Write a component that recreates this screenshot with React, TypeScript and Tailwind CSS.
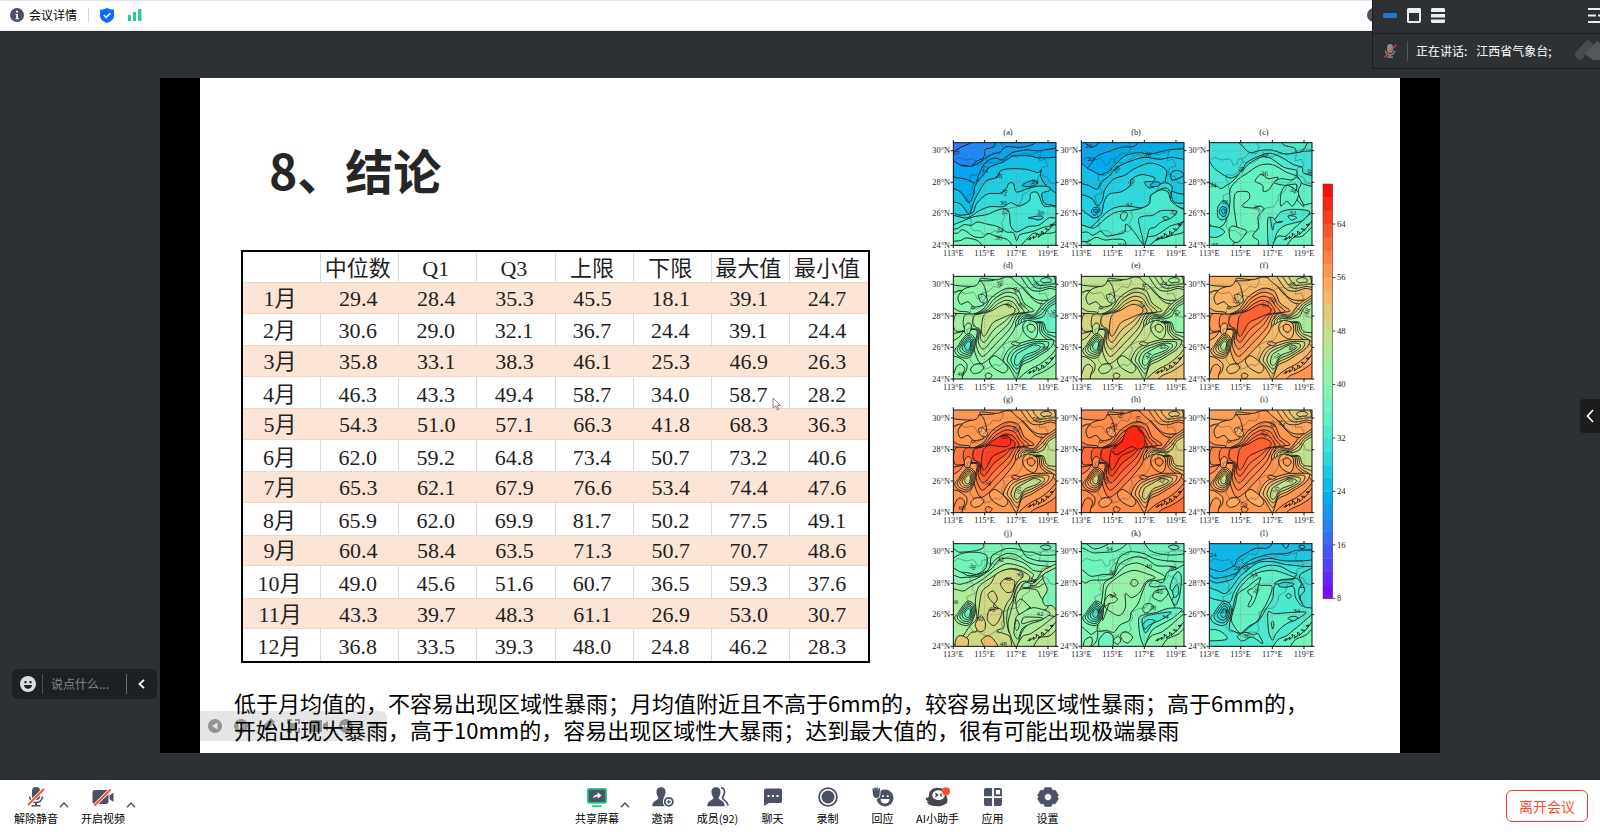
import React from "react";

/* ---------- contour chart ---------- */

type Pt = [number, number];
type Shape = [number, string];

const parse = (s: string): Pt[] => s.trim().split(/\s+/).map((p) => p.split(",").map(Number) as Pt);

function smooth(p: Pt[]): string {
  const n = p.length;
  let d = `M${p[0][0]} ${p[0][1]}`;
  for (let i = 0; i < n; i++) {
    const a = p[(i - 1 + n) % n], b = p[i], c = p[(i + 1) % n], e = p[(i + 2) % n];
    const k = 7;
    d += `C${(b[0] + (c[0] - a[0]) / k).toFixed(1)} ${(b[1] + (c[1] - a[1]) / k).toFixed(1)} ${(c[0] - (e[0] - b[0]) / k).toFixed(1)} ${(c[1] - (e[1] - b[1]) / k).toFixed(1)} ${c[0].toFixed(1)} ${c[1].toFixed(1)}`;
  }
  return d + "Z";
}

function rainbow(level: number): string {
  const x = Math.min(1, Math.max(0, (level - 8) / 62));
  const r = Math.min(1, Math.abs(2 * x - 0.5));
  const g = Math.sin(Math.PI * x);
  const b = Math.cos((Math.PI * x) / 2);
  return `rgb(${Math.round(r * 255)},${Math.round(g * 245)},${Math.round(b * 255)})`;
}

function nest(outer: string, inner: string, levels: number[]): Shape[] {
  const o = parse(outer), n = parse(inner);
  return levels.map((lv, i) => {
    const t = levels.length > 1 ? i / (levels.length - 1) : 0;
    return [lv, o.map((q, j) => `${q[0] + (n[j][0] - q[0]) * t},${q[1] + (n[j][1] - q[1]) * t}`).join(" ")];
  });
}

const SE = "340,-30 340,340 -30,340";
const below = (line: string) => line + " " + SE;

const CENTRE_OUT = "-20,112 48,116 90,98 116,62 160,36 195,44 212,80 242,104 200,114 180,165 132,222 84,262 62,215 68,160 -20,172";
const CENTRE_IN = "90,120 98,110 118,102 138,90 155,84 172,88 185,98 182,110 168,116 145,126 118,140 98,175 88,178 84,160 86,138";
const NORTH_OUT = "-20,20 60,30 78,14 84,6 130,10 160,2 190,8 204,30 230,60 262,82 330,70 330,-30 -20,-30";
const LEFT_OUT = "26,190 44,172 62,182 66,205 56,234 40,246 14,238 4,222 16,206";
const LEFT_IN = "38,202 44,194 50,198 52,206 48,218 42,222 36,218 34,212 35,206";
const EAST_OUT = "188,135 210,112 240,116 262,92 285,72 330,60 330,215 290,194 262,172 256,138 236,150 205,128 190,150";
const EAST_IN = "212,128 222,126 244,128 270,120 288,92 330,78 330,160 292,168 278,160 270,138 240,136 226,132 214,134";
const LOBE_OUT = "150,252 164,222 186,206 230,192 260,190 300,192 290,216 258,238 232,254 205,268 190,306 176,288 166,270";
const LOBE_IN = "184,250 190,234 202,226 220,216 240,206 256,208 262,214 248,224 232,230 214,238 198,262 190,268 184,262";
const TOP_OUT = "196,-20 206,6 232,40 262,44 290,36 330,42 330,-20 260,-30";
const TOP_IN = "262,10 264,16 272,20 280,18 290,18 294,10 284,4 272,5";

function summer(b: number, c: number[], e: number[], se: number): Shape[] {
  return [
    [b - 2, "-20,-20 130,-20 150,-8 120,12 80,14 84,26 60,44 20,42 -20,50"],
    [b, "14,62 32,38 62,28 80,14 92,28 100,60 92,84 62,92 44,76 22,84"],
    [b - 2, "76,56 90,54 102,68 98,80 84,78 78,68"],
    ...nest(NORTH_OUT, "-20,-20 60,-12 88,-10 100,-8 140,-2 166,-10 180,10 216,40 236,62 264,72 330,58 330,-40 -20,-40", [b, b - 1]),
    ...nest(TOP_OUT, TOP_IN, [e[0], e[1], e[1], e[2]]),
    [b + 2, "-20,90 16,104 50,110 38,142 28,168 12,186 -20,192"],
    [b + 4, "-20,106 12,122 24,140 12,156 -20,164"],
    ...nest(CENTRE_OUT, CENTRE_IN, c),
    [b, "34,150 44,140 54,146 52,162 44,176 34,168"],
    ...nest(LEFT_OUT, LEFT_IN, [b, b - 2, b - 4, b - 6, b - 8]),
    ...nest(EAST_OUT, EAST_IN, e),
    [b - 1, "208,150 222,132 250,142 252,172 240,188 216,174"],
    [b + 1, "222,148 236,144 246,156 236,168 224,162"],
    ...nest(LOBE_OUT, LOBE_IN, e),
    [b, "-20,246 12,242 40,262 36,288 12,300 -20,310"],
    [b + 1, "8,274 22,264 34,276 28,296 22,320 -4,320"],
    [b - 1, "52,278 62,266 80,262 92,272 82,286 66,292 56,288"],
    [b + 1, "96,296 104,290 116,296 110,306 100,306"],
    [b - 1, "108,252 124,238 150,256 164,276 150,290 120,274"],
    [se - 2, "196,324 206,298 232,278 262,262 290,240 330,204 330,330"],
    [se, "220,330 240,300 270,286 304,264 330,236 330,330"],
    [b + 1, "174,202 184,196 200,202 190,208"],
    [b - 3, "54,93 60,91 64,95 58,98"],
  ];
}

const MAPS: { id: string; base: number; shift?: number; shapes: Shape[]; labels: [number, number, number, string][] }[] = [
  {
    id: "a", base: 17, shift: 1.5,
    shapes: [
      [18, below("-20,38 0,29 22,14 52,1 76,-20")],
      [20, below("-20,74 0,70 34,68 52,74 66,58 92,44 96,20 122,12 148,-20")],
      [21, below("-20,72 28,70 56,70 84,56 108,38 140,28 158,12 200,14 240,5 262,-20")],
      [22, below("-20,116 12,106 38,110 66,120 78,92 96,60 124,46 150,52 176,30 220,22 260,24 330,8")],
      [24, below("-20,146 0,138 24,150 46,180 60,158 66,128 92,94 112,72 150,58 180,40 230,40 260,46 330,36")],
      [26, below("-20,184 0,178 24,186 48,214 62,176 80,142 100,114 132,104 142,84 172,78 218,80 254,90 264,82 262,102 284,134 330,146")],
      [28, below("-20,214 20,218 58,210 70,182 102,154 140,152 160,136 166,122 180,122 190,148 228,136 260,130 288,134 288,144 266,152 270,176 286,186 330,170")],
      [30, below("-20,224 40,226 78,204 110,192 150,192 172,180 198,190 228,174 232,152 252,150 270,188 292,190 330,174")],
      [32, below("-20,250 0,246 26,236 62,222 100,216 134,202 158,198 168,212 172,250 190,268 224,252 256,248 286,226 330,204")],
      [34, below("-20,268 12,258 32,246 54,248 72,238 100,244 134,252 160,268 180,270 190,294 200,276 232,268 264,256 330,216")],
      [35, below("-20,274 12,272 24,262 36,264 62,282 88,284 104,272 126,280 160,290 174,310 150,340 190,340 204,308 240,272 264,274 330,238")],
      [36, "-20,300 20,294 40,286 76,296 84,326 -20,330"],
      [24, "206,128 222,118 240,114 252,120 244,128 224,132"], [28, "224,226 242,222 262,220 270,226 254,232 240,228"],
    ],
    labels: [[8, 28, -30, "18"], [96, 80, -80, "22"], [138, 98, 20, "26"], [152, 150, -70, "28"], [150, 180, 0, "30"], [154, 208, -80, "32"], [140, 262, 10, "34"], [136, 284, 5, "36"], [262, 210, 15, "30"], [246, 116, 5, "24"]],
  },
  {
    id: "b", base: 20, shift: 1.5,
    shapes: [
      [21, below("-20,10 30,14 52,2 66,-20")],
      [22, below("-20,92 4,88 24,70 48,40 84,26 120,14 160,10 200,-20")],
      [24, below("-20,74 24,80 56,96 84,84 104,64 130,40 170,30 208,34 260,22 330,12")],
      [25, below("-20,140 14,126 46,140 60,118 84,100 108,74 146,56 190,44 236,50 270,44 330,46")],
      [26, below("-20,166 0,156 32,168 48,190 64,170 70,142 96,110 130,98 156,80 200,62 230,66 256,84 252,118 266,144 330,142")],
      [28, below("-20,196 12,210 38,226 60,214 68,178 84,154 118,148 146,130 150,110 180,96 218,104 216,116 190,118 206,136 250,120 272,132 270,156 282,180 330,160")],
      [30, below("-20,254 4,248 28,254 58,226 80,206 104,194 140,190 184,196 214,182 228,146 254,136 268,152 272,182 330,184")],
      [31, below("-20,248 36,256 72,228 96,212 116,206 170,200 204,184 208,160 236,142 260,148 274,180 330,190")],
      [32, below("-20,280 16,268 34,278 58,266 74,280 104,276 130,268 134,244 160,270 178,296 190,308 196,284 224,278 264,252 330,206")],
      [34, below("-20,300 20,296 44,284 70,292 96,290 128,292 142,320 190,340 208,306 230,290 266,280 330,236")],
      [24, "30,206 36,196 48,194 56,202 46,214 38,218"], [22, "36,204 44,200 50,204 44,210"],
      [24, "206,128 220,118 236,120 232,130 214,132"], [25, "268,94 280,84 298,86 308,98 290,108 272,112"],
      [32, "118,216 126,208 138,212 134,228 126,234 118,226"],
      [30, "172,228 190,220 214,218 240,204 286,206 270,226 240,238 220,254 204,260 196,290 188,306 182,280 176,256"],
      [32, "244,224 254,222 262,226 254,232"],
    ],
    labels: [[22, 8, 0, "20"], [30, 46, 0, "22"], [105, 80, -50, "28"], [200, 34, 15, "26"], [150, 118, -60, "30"], [144, 184, 0, "32"], [278, 208, 20, "32"], [120, 306, 0, "34"], [22, 300, 60, "34"]],
  },
  {
    id: "c", base: 30, shift: 0.8,
    shapes: [
      [31, "92,-20 100,10 122,30 150,24 186,22 230,34 284,26 330,20 330,-20"],
      [32, "220,-20 222,6 256,16 262,30 282,22 296,-4 300,-20"],
      [32, below("-20,60 18,80 44,98 66,106 92,92 112,60 150,40 184,32 220,46 252,66 278,74 284,92 330,90")],
      [34, below("-20,136 20,130 34,138 52,128 74,112 96,86 126,58 160,42 186,48 224,74 262,84 262,108 282,124 330,120")],
      [35, below("-20,220 10,256 38,250 52,228 62,178 62,140 86,110 110,94 150,68 190,66 230,88 268,104 262,124 272,170 290,186 330,152")],
      [30, "24,210 26,192 42,174 56,184 60,204 54,224 38,232 26,224"], [28, "30,204 38,192 50,196 52,210 44,222 32,214"], [26, "36,204 44,198 48,206 42,214"],
      [36, "138,112 156,94 176,108 206,104 190,124 178,142 162,146 160,128 140,118"],
      [36, "74,190 80,150 116,148 120,168 98,190 130,196 152,190 164,200 146,222 148,252 130,280 148,296 132,330 60,330 80,292 84,266"],
      [33, "194,120 214,108 248,112 262,104 276,120 266,150 284,190 270,180 258,160 262,126 226,128"],
      [34, "214,190 216,148 234,128 268,152 250,190 232,176"],
      [32, "176,226 196,230 214,208 250,200 300,206 284,232 250,242 224,250 202,272 186,330 176,300"], [33, "184,230 190,224 204,240 220,236 196,242 190,262"], [33, "236,220 252,220 262,226 246,232"],
      [34, "196,326 204,282 230,280 262,250 330,202 330,330"], [36, "230,330 250,286 280,280 330,238 330,330"],
      [36, "60,260 70,250 90,256 112,266 96,290 80,300 62,286"], [32, "-20,250 26,254 46,268 20,284 -20,276"],
    ],
    labels: [[166, 36, 10, "32"], [166, 92, 5, "36"], [96, 82, -60, "30"], [12, 126, 10, "34"], [142, 194, 20, "36"], [250, 208, 0, "32"], [46, 176, 0, "32"], [252, 142, 30, "34"], [18, 304, 0, "35"], [298, 90, -70, "30"]],
  },
  { id: "d", base: 41, shapes: summer(41, [42, 43, 44, 45, 47], [39, 38, 37, 36], 42), labels: [[140, 20, 80, "38"], [190, 40, 60, "42"], [166, 84, 30, "46"], [248, 20, 10, "36"], [206, 86, 40, "42"], [298, 110, -70, "36"], [275, 212, 0, "38"], [22, 290, 0, "40"]] },
  { id: "e", base: 47, shapes: summer(47, [48, 49, 50, 52, 54], [46, 45, 43, 41], 52), labels: [[248, 20, 10, "44"], [182, 84, 50, "54"], [190, 28, 80, "46"], [248, 136, 0, "46"], [244, 210, -20, "42"], [200, 238, -60, "44"], [286, 110, -60, "42"]] },
  { id: "f", base: 53, shapes: summer(54, [56, 57, 58, 60, 62], [51, 49, 47, 44], 57), labels: [[248, 20, 0, "48"], [168, 82, -20, "62"], [190, 70, 30, "60"], [78, 74, 20, "52"], [246, 214, -20, "46"], [204, 240, -50, "50"], [292, 106, -70, "48"]] },
  { id: "g", base: 57, shapes: [...summer(57, [59, 60, 62, 64, 65], [55, 53, 51, 47], 59), [66, "108,102 132,84 154,76 168,82 172,100 158,110 130,108"]], labels: [[248, 24, 0, "56"], [154, 80, 0, "66"], [190, 56, 20, "62"], [104, 218, 20, "58"], [198, 240, 70, "50"], [248, 134, 20, "56"], [26, 292, 0, "60"]] },
  { id: "h", base: 58, shapes: [...summer(58, [60, 61, 63, 65, 66], [56, 54, 52, 50], 61), [67, "94,126 106,108 122,94 136,60 158,48 178,58 190,84 188,110 170,118 150,110 128,122 106,134"]], labels: [[178, 60, 40, "66"], [118, 14, -60, "60"], [98, 46, 10, "58"], [76, 210, 70, "60"], [254, 130, 20, "56"], [240, 210, 20, "52"], [172, 28, 80, "62"]] },
  { id: "i", base: 57, shapes: summer(56, [58, 59, 60, 61, 62], [54, 52, 50, 47], 59), labels: [[166, 70, 30, "62"], [190, 42, 70, "58"], [218, 40, 30, "54"], [240, 130, 10, "52"], [200, 240, -60, "50"], [104, 284, 10, "58"], [240, 210, 20, "50"]] },
  {
    id: "j", base: 36, shift: 0.5,
    shapes: [
      [38, below("-20,34 20,26 62,22 90,12 110,-20")],
      [37, "-20,60 24,30 70,26 100,36 98,72 70,92 34,86 -20,88"],
      [39, below("-20,90 20,84 44,96 76,92 108,76 114,40 140,22 166,14 204,20 220,40 262,52 330,46")],
      [40, below("-20,112 26,102 74,98 100,84 124,50 158,30 190,34 224,56 266,66 330,62")],
      [42, below("-20,134 20,122 44,116 82,98 116,74 138,48 168,44 212,58 240,80 270,84 330,96")],
      [44, below("-20,150 30,142 50,130 90,106 120,82 160,60 206,70 240,92 240,108 330,120")],
      [46, "50,246 70,224 66,172 76,130 110,104 150,80 190,76 228,96 222,114 200,118 186,140 178,170 164,196 160,230 166,264 180,310 -20,330 20,290"],
      [48, "74,220 80,170 88,140 112,120 130,90 168,76 204,84 208,100 190,118 174,160 160,180 150,210 152,250 130,262 170,280 160,330 20,330 50,270 70,262"],
      [49, "110,168 104,152 120,142 132,166 120,188 146,200 136,232 120,246 102,228 108,200 134,194"],
      [49, "142,118 158,104 184,112 178,142 160,146 146,132"],
      [50, "66,248 70,232 84,216 96,236 94,258 78,264"], [51, "6,310 10,282 24,276 44,286 44,306 34,320"], [52, "84,290 102,276 120,286 136,316 104,320 92,306"],
      ...nest("180,176 188,140 206,114 244,112 262,88 285,72 330,66 330,210 262,212 230,234 204,268 190,310 174,282 164,240", "212,132 214,128 222,124 232,126 248,124 262,110 276,102 280,116 268,122 256,130 236,130 224,132 216,134 213,133", [45, 44, 42]),
      [43, "186,180 190,154 204,136 248,138 262,160 284,190 250,206 220,180 202,166"],
      [40, "206,128 216,116 232,120 226,130 212,132"],
      [38, "268,100 284,84 330,76 330,210 296,186 276,186 268,166 282,138"],
      [42, "188,222 202,210 240,192 290,208 262,230 232,240 206,256 194,286 182,268"], [44, "206,240 210,222 228,220 264,222 266,228 236,232"], [44, "184,250 190,228 198,242 192,260"],
      ...nest(LEFT_OUT, LEFT_IN, [42, 41, 39, 38, 36]),
      [38, "202,-20 206,20 240,26 262,34 300,34 330,24 330,-20"], [36, "262,8 278,4 294,10 284,18 268,16"],
      [45, "196,326 206,280 232,270 262,250 330,210 330,330"], [46, "240,330 256,284 290,276 330,244 330,330"],
    ],
    labels: [[58, 68, 30, "38"], [142, 46, -10, "42"], [164, 104, 0, "48"], [116, 196, 10, "48"], [80, 224, 0, "50"], [202, 92, 30, "46"], [238, 108, 20, "44"], [260, 208, 0, "42"], [150, 298, 0, "48"], [4, 172, 0, "46"]],
  },
  {
    id: "k", base: 35, shift: 1,
    shapes: [
      [36, below("-20,8 40,16 80,2 106,-20")],
      [36, below("-20,34 40,28 96,24 120,14 150,-6 200,2 236,10 250,-20")],
      [37, below("-20,88 30,98 66,92 96,92 104,66 116,40 146,24 188,30 216,44 262,52 330,48")],
      [38, below("-20,120 12,118 30,110 76,108 98,94 116,60 158,40 196,46 226,66 270,68 330,80")],
      [40, "48,260 56,210 64,150 70,116 100,98 130,68 168,58 210,76 250,98 240,108 200,114 186,138 170,180 150,206 144,230 116,244 98,266 76,260"],
      [41, "64,230 70,170 78,128 116,96 156,80 196,90 222,102 194,114 174,148 150,162 132,150 132,192 112,216 70,190 74,166 90,156"],
      [42, "70,172 84,154 108,164 100,176 82,180 72,188"], [42, "148,118 154,108 166,110 170,120 160,128 150,124"],
      ...nest(LEFT_OUT, LEFT_IN, [37, 36, 34, 33, 31]),
      [36, "204,126 216,110 244,116 258,86 280,78 330,64 330,190 298,204 284,196 262,150 250,128 220,130"],
      [34, "266,134 276,100 290,84 300,100 296,150 284,184 272,170 280,150"], [32, "274,142 288,122 292,148 280,162"],
      [38, "214,160 222,142 252,136 260,150 240,172 226,168"], [38, "184,194 192,182 208,180 216,190 200,206 188,206"],
      [35, "172,226 186,214 226,206 262,194 302,196 276,222 248,238 216,256 200,282 190,310 176,276"], [32, "182,232 192,218 240,208 270,206 240,228 214,240 192,268"], [31, "184,244 200,228 222,232 202,246 192,256"],
      [38, "-20,240 16,262 30,272 48,262 46,290 28,310 -20,330"], [40, "10,290 30,280 32,298 20,320 6,320"], [36, "52,292 70,268 86,268 96,282 90,330 60,330"], [40, "96,290 112,278 118,292 108,302"], [40, "118,274 134,264 154,280 140,298 124,290"],
      [39, "196,326 206,280 240,266 262,250 330,204 330,330"], [41, "240,330 256,288 290,272 330,240 330,330"],
      [36, "196,-20 206,20 262,34 330,24 330,-20"], [34, "262,8 278,4 294,10 284,18 268,16"],
    ],
    labels: [[84, 14, 0, "34"], [92, 86, 10, "36"], [202, 66, 10, "40"], [94, 154, -30, "44"], [214, 190, 10, "38"], [234, 142, 0, "40"], [274, 72, 0, "36"], [252, 218, 0, "34"], [52, 200, 0, "30"]],
  },
  {
    id: "l", base: 24, shift: 0.8,
    shapes: [
      [25, below("-20,84 10,78 36,84 74,66 84,46 112,28 140,14 178,12 210,-20")],
      [26, below("-20,104 18,104 54,98 84,86 108,60 136,44 178,32 230,30 262,20 330,14")],
      [28, below("-20,124 24,118 70,106 96,74 134,56 180,44 232,52 330,42")],
      [30, below("-20,144 16,138 44,150 62,138 92,98 118,76 148,56 190,54 240,64 330,62")],
      [32, below("-20,172 20,168 60,176 74,146 96,112 130,84 172,66 212,68 246,86 262,92 250,108 262,128 330,120")],
      [34, "60,252 70,196 84,144 118,104 150,86 192,80 238,94 256,104 210,110 194,130 190,164 170,196 150,228 126,246 96,268 72,262"],
      [35, "66,226 78,182 86,150 112,132 136,112 154,102 150,124 188,128 176,170 160,200 144,232 118,248 94,268 76,250"],
      [36, "118,150 116,140 130,134 146,120 144,144 136,170 124,188 116,186 128,160"],
      ...nest(LEFT_OUT, LEFT_IN, [31, 30, 29, 28]),
      [31, "196,120 212,110 244,108 262,104 276,120 268,140 272,168 286,184 276,186 258,160 254,132 226,122"],
      [29, "206,124 222,116 246,118 254,122 236,130 216,130"], [33, "230,156 238,150 246,156 238,164"],
      [30, "270,100 286,84 330,76 330,186 300,192 284,188 272,160 286,138"],
      [34, "176,206 196,210 250,206 290,206 264,226 232,240 212,256 196,276 190,290 178,264"], [32, "186,240 190,232 194,242 190,256"], [32, "236,224 250,218 266,222 252,232"],
      [34, "-20,264 18,258 44,270 50,288 -20,290"], [34, "84,278 110,266 132,274 146,270 160,300 128,280 100,292"],
      [35, "196,326 204,290 232,276 262,252 330,206 330,330"], [37, "240,330 256,290 290,274 330,242 330,330"],
      [26, "216,-20 222,6 232,14 240,-4 244,-20"], [24, "268,8 278,4 288,10 278,16"],
    ],
    labels: [[12, 32, 0, "24"], [84, 70, 0, "26"], [110, 74, -50, "28"], [134, 94, -20, "34"], [140, 142, -60, "36"], [46, 200, 0, "28"], [262, 200, 0, "34"], [112, 276, 0, "36"]],
  },
];

const BORDERS = [
  "0,56 14,44 38,52 60,48 66,54 72,68 84,64 86,50 98,48 100,60 88,74 92,86 70,98 52,96 50,112 60,122 56,138 66,148 40,160 44,176 54,192 48,216 54,238 50,250 60,264 78,264 96,278 110,274 124,264 140,268 150,258 144,240 154,222 148,206 170,196 194,192",
  "98,48 110,42 120,30 140,34 150,16 142,0",
  "100,58 130,62 156,42 172,36 190,44 210,32 232,36 262,26",
  "194,192 206,170 208,156 228,144 234,124 250,112 260,96 264,76 284,70 276,50 258,54 262,26 284,18 308,22",
  "262,96 282,104 290,120 308,124",
];
const COAST = "222,292 232,284 228,292 242,280 240,288 250,280 248,272 258,278 254,284 266,276 264,266 272,270 270,276 282,264 276,258 286,260 284,264 296,250 290,246 300,244 296,250 308,234";
const line = (s: string) => parse(s).map((p, i) => `${i ? "L" : "M"}${p[0]} ${p[1]}`).join("");

function MapPanel({ index }: { index: number }) {
  const m = MAPS[index];
  const shift = m.shift ?? 0;
  const x = 100 + (index % 3) * 384;
  const y = 68 + Math.floor(index / 3) * 401;
  const clip = `clip-${m.id}`;
  return (
    <g transform={`translate(${x} ${y})`}>
      <clipPath id={clip}><rect width="308" height="308" /></clipPath>
      <g clipPath={`url(#${clip})`}>
        <rect width="308" height="308" fill={rainbow(m.base + shift)} />
        {m.shapes.map(([lv, pts], i) => (
          <path key={i} d={smooth(parse(pts))} fill={rainbow(lv + shift)} stroke="#0b1512" strokeWidth="2.6" />
        ))}
        {BORDERS.map((b, i) => <path key={i} d={line(b)} fill="none" stroke="#333" strokeOpacity="0.65" strokeWidth="1.8" />)}
        <path d={line(COAST)} fill="none" stroke="#111" strokeWidth="2.6" />
        <path d="M0 24H308M0 119H308M0 213H308M94 0V308M189 0V308M284 0V308" stroke="#a08080" strokeWidth="2.4" strokeDasharray="3 5" />
        {m.labels.map(([lx, ly, r, t], i) => (
          <text key={i} x={lx} y={ly + 8} fontSize="21" textAnchor="middle" fill="#1a1a1a" transform={`rotate(${r} ${lx} ${ly})`}>{t}</text>
        ))}
      </g>
      <rect width="308" height="308" fill="none" stroke="#111" strokeWidth="3" />
      <path d="M-8 24H0M-8 119H0M-8 213H0M-8 308H0M308 24h7M308 119h7M308 213h7M308 308h7M0 308v8M94 308v8M189 308v8M284 308v8M0 0v-8M94 0v-8M189 0v-8M284 0v-8" stroke="#111" strokeWidth="3" />
      {["30°N", "28°N", "26°N", "24°N"].map((t, i) => (
        <text key={t} x="-10" y={[32, 127, 221, 316][i]} fontSize="25" textAnchor="end">{t}</text>
      ))}
      {["113°E", "115°E", "117°E", "119°E"].map((t, i) => (
        <text key={t} x={[0, 94, 189, 284][i]} y="340" fontSize="25" textAnchor="middle">{t}</text>
      ))}
      <text x="164" y="-24" fontSize="25" textAnchor="middle">({m.id})</text>
    </g>
  );
}

function ContourFigure() {
  return (
    <svg viewBox="0 0 1320 1635" className="w-[440px] shrink-0 self-start font-['Liberation_Serif',serif]" fill="#1c1c1c" role="img" aria-label="(a)–(l)">
      {MAPS.map((m, i) => <MapPanel key={m.id} index={i} />)}
      {Array.from({ length: 31 }, (_, i) => (
        <rect key={i} x="1209" y={1395 - i * 40.1} width="29" height="41" fill={rainbow(9 + i * 2)} />
      ))}
      <rect x="1209" y="192" width="29" height="1244" fill="none" stroke="#333" strokeWidth="1.5" />
      {[8, 16, 24, 32, 40, 48, 56, 64].map((v, i) => (
        <g key={v}>
          <path d={`M1238 ${1435 - i * 160.4}h8`} stroke="#222" strokeWidth="2.5" />
          <text x="1251" y={1443 - i * 160.4} fontSize="26">{v}</text>
        </g>
      ))}
    </svg>
  );
}

/* ---------- slide ---------- */

const HEAD = ["", "中位数", "Q1", "Q3", "上限", "下限", "最大值", "最小值"];
const ROWS = [
  "29.4 28.4 35.3 45.5 18.1 39.1 24.7",
  "30.6 29.0 32.1 36.7 24.4 39.1 24.4",
  "35.8 33.1 38.3 46.1 25.3 46.9 26.3",
  "46.3 43.3 49.4 58.7 34.0 58.7 28.2",
  "54.3 51.0 57.1 66.3 41.8 68.3 36.3",
  "62.0 59.2 64.8 73.4 50.7 73.2 40.6",
  "65.3 62.1 67.9 76.6 53.4 74.4 47.6",
  "65.9 62.0 69.9 81.7 50.2 77.5 49.1",
  "60.4 58.4 63.5 71.3 50.7 70.7 48.6",
  "49.0 45.6 51.6 60.7 36.5 59.3 37.6",
  "43.3 39.7 48.3 61.1 26.9 53.0 30.7",
  "36.8 33.5 39.3 48.0 24.8 46.2 28.3",
].map((r) => r.split(" "));

const PLAIN = "border-r border-[#d9d9d9] px-0 pt-1 pb-0 pr-1 font-normal whitespace-nowrap last:border-r-0";
const TINTED = "border-y border-[#f3d3c2] px-0 pt-0.5 pb-0 pr-1 font-normal whitespace-nowrap";

function DataTable() {
  return (
    <table className="h-[413px] w-full table-fixed border-separate border-spacing-0 border-2 border-black text-center font-['Liberation_Serif','Noto_Sans_CJK_SC',serif] text-[22px] leading-[26px] text-[#1f1f1f]">
      <thead>
        <tr>
          {HEAD.map((h, i) => <th key={i} scope="col" className={PLAIN}>{h}</th>)}
        </tr>
      </thead>
      <tbody>
        {ROWS.map((r, i) => (
          <tr key={i} className={i % 2 ? "" : "bg-[#fce4d6]"}>
            <th scope="row" className={i % 2 ? PLAIN : TINTED}>{i + 1}月</th>
            {r.map((v, j) => <td key={j} className={i % 2 ? PLAIN : TINTED}>{v}</td>)}
          </tr>
        ))}
      </tbody>
    </table>
  );
}

function SlideControls() {
  return (
    <svg viewBox="0 0 187 30" className="absolute bottom-3 left-0 h-[30px] w-[187px]" aria-hidden="true">
      <path d="M0 0H180Q187 0 187 8V22Q187 30 180 30H0Z" fill="#000" fillOpacity="0.1" />
      <g fill="#777" fillOpacity="0.75">
        <path fillRule="evenodd" d="M15 8a7 7 0 1 0 .01 0zM17.500 11.500v7L12 15z" />
        <path fillRule="evenodd" d="M41 8a7 7 0 1 0 .01 0zM38.500 11.500v7L44 15z" />
        <path d="M62 20l2-6 7-7 4 4-7 7z" />
        <path d="M87 8h5v2h-3v3h-2zM95 8h5v5h-2v-3h-3zM87 17h2v3h3v2h-5zM98 17h2v5h-5v-2h3zM90 12h7v6h-7z" />
        <path d="M111 9h11v12h-11zM123 13l5-3v10l-5-3z" />
        <path fillRule="evenodd" d="M146 8a7 7 0 1 0 .01 0zM142 14h2v2h-2zm3 0h2v2h-2zm3 0h2v2h-2z" />
        <path d="M175 10v10l-6-5z" fillOpacity="0.3" />
      </g>
    </svg>
  );
}

function Slide() {
  return (
    <div className="mx-auto w-4/5 bg-black px-10">
      <section className="relative flex min-h-[675px] flex-col bg-white pr-10 text-black">
        <SlideControls />
        <div className="flex gap-[50px] pt-[42px] pl-[41px]">
          <div className="flex min-w-0 flex-1 flex-col">
            <h1 className="mt-6 mb-14 pl-7 text-5xl leading-[50px] font-bold text-[#262626]">8、结论</h1>
            <div className="relative">
              <DataTable />
              <svg viewBox="0 0 10 14" className="absolute top-[147px] left-[531px] h-3.5 w-2.5" aria-hidden="true">
                <path d="M1 1v10l2.500-2 2 4 1.500-.8-2-3.800H8.500z" fill="#fff" stroke="#777" strokeWidth=".9" />
              </svg>
            </div>
          </div>
          <ContourFigure />
        </div>
        <p className="relative mt-6 pl-[34px] text-[22px] leading-[27px] whitespace-nowrap">
          低于月均值的，不容易出现区域性暴雨；月均值附近且不高于6mm的，较容易出现区域性暴雨；高于6mm的，
          <br />
          开始出现大暴雨，高于10mm的，容易出现区域性大暴雨；达到最大值的，很有可能出现极端暴雨
        </p>
      </section>
    </div>
  );
}

/* ---------- icons ---------- */

type IconProps = { children: React.ReactNode; className?: string; w?: number; h?: number };
const Svg = ({ children, className = "h-5 w-[22px]", w = 22, h = 20 }: IconProps) => (
  <svg viewBox={`0 0 ${w} ${h}`} className={className} fill="#4c5265" aria-hidden="true">{children}</svg>
);

const MicShape = () => (
  <>
    <rect x="7" y="0" width="8" height="13" rx="4" />
    <path d="M4.500 9.500C5 13.500 7.500 15.500 11 15.500S17 13.500 17.500 9.500" fill="none" stroke="currentColor" strokeWidth="1.600" />
    <path d="M10 15h2v3h3.500v1.600h-9V18H10z" />
  </>
);
const MicOff = () => (
  <Svg className="h-5 w-[22px] text-[#4c5265]">
    <MicShape />
    <path d="M3 18L19 2" stroke="#fff" strokeWidth="3.400" />
    <path d="M3 18L19 2" stroke="#ff4d35" strokeWidth="1.800" />
  </Svg>
);
const VideoOff = () => (
  <Svg>
    <rect x="0.500" y="3" width="16" height="14" rx="2.500" />
    <path d="M17.500 8.500L21.500 5.500V15L17.500 12z" />
    <path d="M2.500 18.500L18.500 2.500" stroke="#fff" strokeWidth="3.600" />
    <path d="M2.500 18.500L18.500 2.500" stroke="#ff4d35" strokeWidth="1.900" />
  </Svg>
);
const Share = () => (
  <Svg>
    <rect x="1.800" y="1.800" width="18.400" height="14" rx="1.500" stroke="#22cc8c" strokeWidth="1.800" />
    <path d="M7 11.500C7.500 8.500 9.500 7.300 11.800 7.300V5.300L15.500 8.600L11.800 11.600V9.700C9.800 9.600 8.300 10 7 11.500z" fill="#fff" />
    <rect x="6" y="18.200" width="10" height="1.700" rx=".8" fill="#22cc8c" />
  </Svg>
);
const PERSON = "M9 .3C5.500 .3 4.300 2.700 4.500 5.500C4.600 7.800 5.600 9.300 6.300 10.200V11.800C4.500 13.500 .3 14 .3 19.200H17.700C17.700 14 13.500 13.500 11.700 11.800V10.200C12.400 9.300 13.400 7.800 13.500 5.500C13.700 2.700 12.500 .3 9 .3z";
const Invite = () => (
  <Svg>
    <path d={PERSON} />
    <circle cx="16.800" cy="14.800" r="6" fill="#fff" />
    <circle cx="16.800" cy="14.800" r="4" fill="none" stroke="#4c5265" strokeWidth="1.800" />
    <path d="M14.800 14.800h4M16.800 12.800v4" stroke="#4c5265" strokeWidth="1.300" />
  </Svg>
);
const Members = () => (
  <Svg>
    <path d={PERSON} />
    <path d="M14 .9C17.300 1 17.800 3.500 17.400 6C17.100 8 16.300 9 15.600 10V11.500C18 14 20.500 14.500 21.200 18.500" fill="none" stroke="#4c5265" strokeWidth="1.700" />
  </Svg>
);
const Chat = () => (
  <Svg>
    <path d="M4 1.500H18Q20 1.500 20 3.500V14Q20 16 18 16H7L2 19V3.500Q2 1.500 4 1.500z" />
    <path d="M5.500 8h2v2h-2zM10 8h2v2h-2zM14.500 8h2v2h-2z" fill="#fff" />
  </Svg>
);
const Record = () => (
  <Svg>
    <circle cx="11" cy="10" r="8.900" fill="none" stroke="#4c5265" strokeWidth="1.800" />
    <circle cx="11" cy="10" r="6.500" />
  </Svg>
);
const Respond = () => (
  <Svg>
    <circle cx="13" cy="11" r="8.500" />
    <path d="M8.500 12h9a4.500 4.500 0 0 1-9 0z" fill="#fff" />
    <path d="M10 8.200h1.800v1.800H10zM14.800 8.200h1.800v1.800h-1.800z" fill="#fff" />
    <path d="M.5 1.500C.5 .8 1.500 .8 1.700 1.500L2.300 4V.8C2.300 0 3.700 0 3.800 .8L4.300 3.500V.7C4.500 0 5.700 0 5.800 .8V4L6.600 1.500C7 .7 8.200 1 8 2L7.600 8C7.400 11.500 3.500 12 1.800 9.500C.8 7.800.5 4 .5 1.500z" stroke="#fff" strokeWidth="1.400" paintOrder="stroke" />
  </Svg>
);
const Assistant = () => (
  <Svg className="h-5 w-[25px]" w={25}>
    <path d="M4 9C3.500 4 7.500 .8 12.500 .8S21.500 4 21.500 9C23.500 13 22 17.500 20.500 16.800C18.500 19 14 19.800 11 19C6.500 19.300 2 17 2 14.800L4 15C1 13.500 .2 11.500 1 11C2 10.500 3 11.500 4 9z" fill="#45464c" />
    <ellipse cx="13.500" cy="8.200" rx="6.200" ry="4.900" fill="#fff" />
    <path d="M10.300 6.300l2.300 1.800L10.300 9.800M16 6.500v3" fill="none" stroke="#333" strokeWidth="1.400" />
    <circle cx="21" cy="4.200" r="4" fill="#ff4d2e" />
  </Svg>
);
const Apps = () => (
  <Svg>
    <path d="M4 1H10V9.300H2V3Q2 1 4 1zM2 11H10V19H4Q2 19 2 17zM12 11H20V17Q20 19 18 19H12z" />
    <path d="M13 2H18Q19 2 19 3V8.300H13z" fill="none" stroke="#4c5265" strokeWidth="1.900" />
  </Svg>
);
const Gear = () => (
  <Svg>
    <path fillRule="evenodd" d="M8 .5H14L15.500 3.200L18.500 3.300L21.500 8.500L20 10L21.500 11.500L18.500 16.700L15.500 16.800L14 19.500H8L6.500 16.800L3.500 16.700L.5 11.500L2 10L.5 8.500L3.500 3.300L6.500 3.200zM11 6.500a3.500 3.500 0 1 0 .01 0z" stroke="#4c5265" strokeLinejoin="round" strokeWidth=".6" />
  </Svg>
);

/* ---------- shell ---------- */

function Tool({ icon, label, className }: { icon: React.ReactNode; label: string; className: string }) {
  return (
    <button className={`flex flex-col items-center pt-[7px] text-[11px] leading-4 whitespace-nowrap text-black ${className}`}>
      {icon}
      <span className="mt-[3px]">{label}</span>
    </button>
  );
}
function More({ label }: { label: string }) {
  return (
    <button aria-label={label} className="flex w-2.5 justify-center pt-[22px]">
      <svg viewBox="0 0 10 6" className="h-1.5 w-2.5 shrink-0" fill="none" stroke="#555" strokeWidth="1.500" aria-hidden="true"><path d="M1 5.200L5 1L9 5.200" /></svg>
    </button>
  );
}
const Info = () => (
  <svg viewBox="0 0 14 14" className="size-3.5 shrink-0" aria-hidden="true">
    <circle cx="7" cy="7" r="7" fill="#4c5265" />
    <path d="M6 2.800h2v1.800H6zM5.500 6H8v4.200h1v1H5.500v-1H6.200V7H5.500z" fill="#fff" />
  </svg>
);

function TopBar() {
  return (
    <header className="flex h-[31px] items-center border-t border-b border-[#e6e6ee] bg-white pb-px pl-2.5 text-xs">
      <button className="flex items-center gap-[5px] text-black"><Info />会议详情</button>
      <span className="ml-[11px] h-3.5 w-px bg-[#d5d5da]" />
      <svg viewBox="0 0 14 15" className="ml-[11px] h-[15px] w-3.5" aria-hidden="true">
        <path d="M7 0Q10 1.800 14 1.800V8Q14 12.500 7 15Q0 12.500 0 8V1.800Q4 1.800 7 0z" fill="#0a6cff" />
        <path d="M3.800 7L6.200 9.400L10.400 5.200" fill="none" stroke="#fff" strokeWidth="1.600" />
      </svg>
      <svg viewBox="0 0 14 12" className="ml-3.5 h-3 w-3.5" fill="#2bcb8d" aria-hidden="true">
        <rect y="6" width="3" height="6" rx=".5" /><rect x="5" y="3" width="3" height="9" rx=".5" /><rect x="10" width="3.500" height="12" rx=".5" />
      </svg>
      <span className="mr-[219px] ml-auto"><Info /></span>
    </header>
  );
}

function SpeakerWindow() {
  return (
    <aside className="absolute top-0 right-0 z-10 w-[228px] overflow-hidden border-b border-l border-[#1b1d1e] bg-[#2d3133] text-xs text-white">
      <div className="flex h-[33px] items-center gap-2.5 pb-[3px] pl-2.5">
        <button aria-label="最小化" className="h-[5px] w-3.5 rounded-[1px] bg-[#1d78d8]" />
        <button aria-label="窗口">
          <svg viewBox="0 0 14 15" className="h-[15px] w-3.5" aria-hidden="true"><path fillRule="evenodd" d="M1 0H13L14 1V14L13 15H1L0 14V1zM2 5V13H12V5z" fill="#eee" /></svg>
        </button>
        <button aria-label="列表">
          <svg viewBox="0 0 14 15" className="h-[15px] w-3.5" fill="#eee" aria-hidden="true"><path d="M1 0H13L14 1V4H0V1zM0 6H14V9.500H0zM0 11.500H14V14L13 15H1L0 14z" /></svg>
        </button>
        <button aria-label="展开" className="ml-auto">
          <svg viewBox="0 0 12 15" className="h-[15px] w-3" fill="none" stroke="#eee" strokeWidth="2" aria-hidden="true"><path d="M0 1H12M0 7.500H8M10 7.500H12M0 14H12" /></svg>
        </button>
      </div>
      <div className="flex h-[35px] items-center border-t border-[#1b1d1e] pl-[9px]">
        <svg viewBox="0 0 22 20" className="h-3.5 w-4 text-[#8c8f90]" fill="#8c8f90" aria-hidden="true">
          <MicShape /><path d="M3 19L20 1" stroke="#e2413a" strokeWidth="1.800" />
        </svg>
        <span className="ml-[9px] h-5 w-px bg-[#55585a]" />
        <span className="ml-2">正在讲话:</span>
        <span className="ml-[9px] whitespace-nowrap">江西省气象台;</span>
        <svg viewBox="0 0 26 24" className="ml-auto h-6 w-[26px] shrink-0" aria-hidden="true">
          <path d="M1 14L12 2Q14 0 16 2L19 6L8 20Q6 22 4 20L1 17z" fill="#4a4d4f" /><path d="M12 13L23 2L26 4V21H19L12 16z" fill="#55585a" />
        </svg>
      </div>
    </aside>
  );
}

function ChatBox() {
  return (
    <form className="absolute bottom-[81px] left-3 flex h-[30px] w-[145px] items-center rounded-md bg-[#1e2123]" onSubmit={(e) => e.preventDefault()}>
      <button type="button" aria-label="表情" className="ml-2">
        <svg viewBox="0 0 16 16" className="size-4" aria-hidden="true"><circle cx="8" cy="8" r="8" fill="#ddd" /><path d="M4.500 5h2v2.200h-2zM9.500 5h2v2.200h-2zM4 9h8Q11.500 12.800 8 12.800T4 9z" fill="#1e2123" /></svg>
      </button>
      <span className="ml-1.5 h-5 w-px bg-[#4b4e50]" />
      <input aria-label="说点什么" placeholder="说点什么..." className="ml-2 w-0 flex-1 bg-transparent text-xs text-white outline-none placeholder:text-[#85888a]" />
      <span className="h-5 w-px bg-[#6b6e70]" />
      <button type="button" aria-label="收起" className="mr-3 ml-[11px]">
        <svg viewBox="0 0 7 10" className="h-2.5 w-[7px]" fill="none" stroke="#fff" strokeWidth="1.800" aria-hidden="true"><path d="M6 .8L1.500 5L6 9.200" /></svg>
      </button>
    </form>
  );
}

export default function App() {
  return (
    <div className="relative flex min-h-screen flex-col overflow-hidden bg-[#2d3133] font-['Noto_Sans_CJK_SC',sans-serif]">
      <TopBar />
      <SpeakerWindow />
      <main className="relative flex-1 pt-[47px] pb-[27px]">
        <Slide />
        <button aria-label="展开侧栏" className="absolute top-[368px] right-0 flex h-[34px] w-5 items-center justify-center rounded-l bg-[#1c1d1e]">
          <svg viewBox="0 0 8 14" className="h-3.5 w-2" fill="none" stroke="#fff" strokeWidth="1.700" aria-hidden="true"><path d="M7 1L1.500 7L7 13" /></svg>
        </button>
        <ChatBox />
      </main>
      <footer className="grid h-[52px] grid-cols-[1fr_auto_1fr] items-start bg-white">
        <div className="flex pl-[13px]">
          <Tool icon={<MicOff />} label="解除静音" className="w-[46px]" />
          <More label="音频选项" />
          <Tool icon={<VideoOff />} label="开启视频" className="ml-[11px] w-[46px]" />
          <More label="视频选项" />
        </div>
        <nav className="flex pl-[49px]">
          <Tool icon={<Share />} label="共享屏幕" className="w-[46px]" />
          <More label="共享选项" />
          <Tool icon={<Invite />} label="邀请" className="ml-[5px] w-[55px]" />
          <Tool icon={<Members />} label="成员(92)" className="w-[55px]" />
          <Tool icon={<Chat />} label="聊天" className="w-[55px]" />
          <Tool icon={<Record />} label="录制" className="w-[55px]" />
          <Tool icon={<Respond />} label="回应" className="w-[55px]" />
          <Tool icon={<Assistant />} label="AI小助手" className="w-[55px]" />
          <Tool icon={<Apps />} label="应用" className="w-[55px]" />
          <Tool icon={<Gear />} label="设置" className="w-[55px]" />
        </nav>
        <button className="mt-2.5 mr-3 h-8 w-[82px] justify-self-end rounded-md border border-[#f0402c] text-sm text-[#ff4d30]">离开会议</button>
      </footer>
    </div>
  );
}
